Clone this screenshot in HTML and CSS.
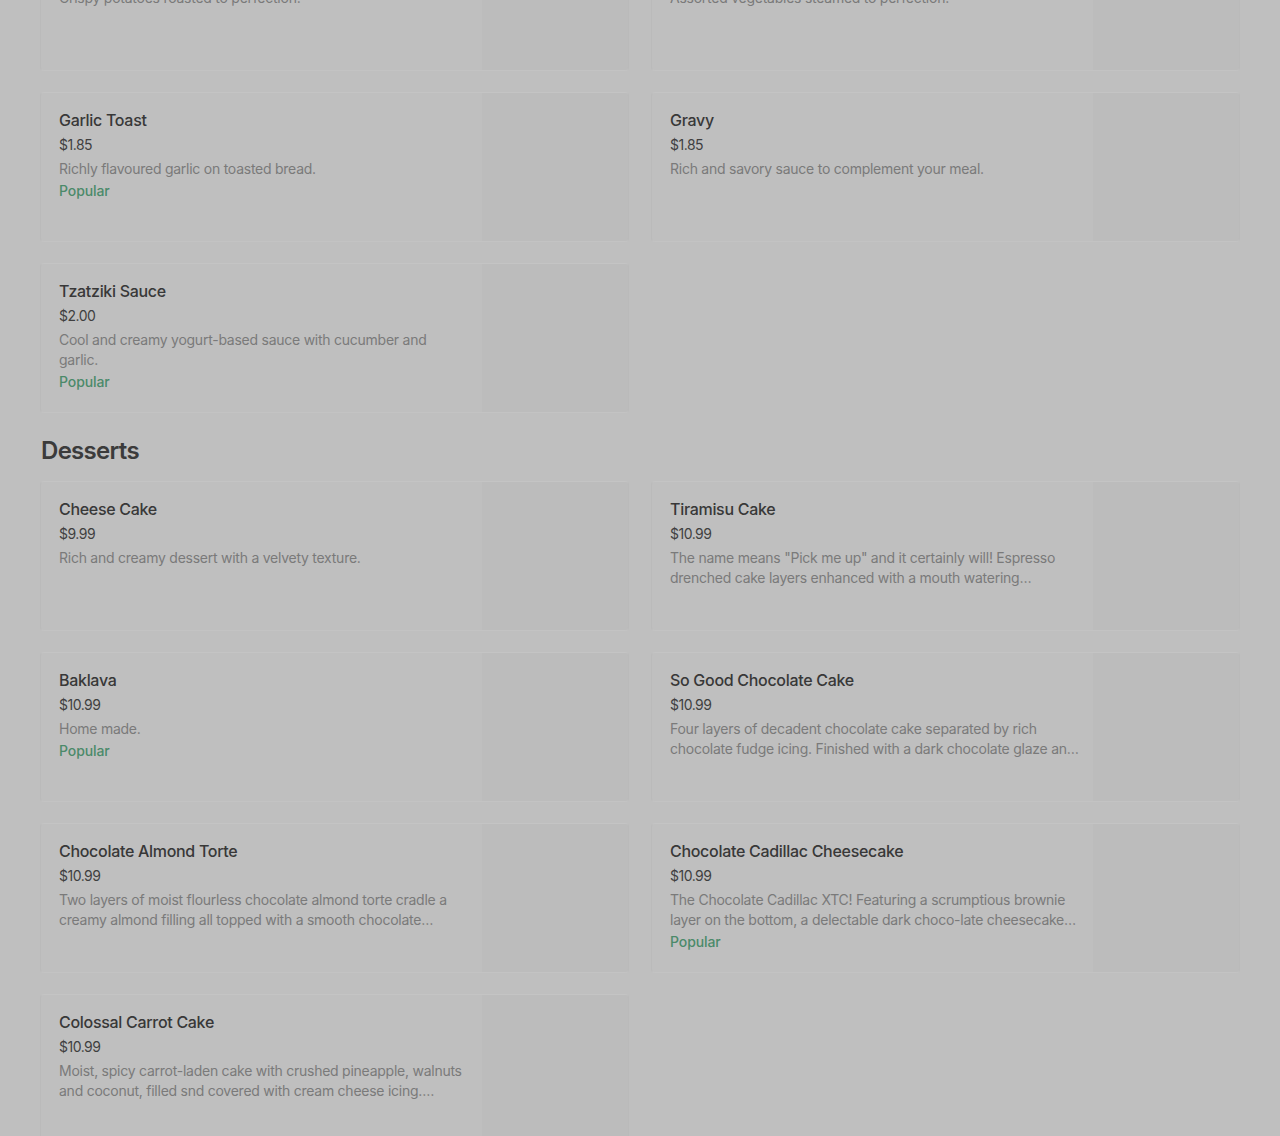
FILE: index.html
```html
<!DOCTYPE html>
<html lang="en">
<head>
<meta charset="utf-8">
<title>Menu</title>
<link rel="stylesheet" href="styles.css">
</head>
<body>
<main class="menu">
  <section class="section">
    <div class="grid">
      <article class="card">
        <div class="info">
          <h3 class="name">Roasted Potatoes</h3>
          <div class="price">$3.99</div>
          <p class="desc">Crispy potatoes roasted to perfection.</p>
        </div>
        <div class="thumb"></div>
      </article>
      <article class="card">
        <div class="info">
          <h3 class="name">Steamed Vegetables</h3>
          <div class="price">$3.99</div>
          <p class="desc">Assorted vegetables steamed to perfection.</p>
        </div>
        <div class="thumb"></div>
      </article>
      <article class="card">
        <div class="info">
          <h3 class="name">Garlic Toast</h3>
          <div class="price">$1.85</div>
          <p class="desc">Richly flavoured garlic on toasted bread.</p>
          <div class="tag">Popular</div>
        </div>
        <div class="thumb"></div>
      </article>
      <article class="card">
        <div class="info">
          <h3 class="name">Gravy</h3>
          <div class="price">$1.85</div>
          <p class="desc">Rich and savory sauce to complement your meal.</p>
        </div>
        <div class="thumb"></div>
      </article>
      <article class="card">
        <div class="info">
          <h3 class="name">Tzatziki Sauce</h3>
          <div class="price">$2.00</div>
          <p class="desc">Cool and creamy yogurt-based sauce with cucumber and garlic.</p>
          <div class="tag">Popular</div>
        </div>
        <div class="thumb"></div>
      </article>
    </div>
  </section>

  <section class="section">
    <h2 class="section-title">Desserts</h2>
    <div class="grid">
      <article class="card">
        <div class="info">
          <h3 class="name">Cheese Cake</h3>
          <div class="price">$9.99</div>
          <p class="desc">Rich and creamy dessert with a velvety texture.</p>
        </div>
        <div class="thumb"></div>
      </article>
      <article class="card">
        <div class="info">
          <h3 class="name">Tiramisu Cake</h3>
          <div class="price">$10.99</div>
          <p class="desc">The name means "Pick me up" and it certainly will! Espresso drenched cake layers enhanced with a mouth watering mascarpone cream.</p>
        </div>
        <div class="thumb"></div>
      </article>
      <article class="card">
        <div class="info">
          <h3 class="name">Baklava</h3>
          <div class="price">$10.99</div>
          <p class="desc">Home made.</p>
          <div class="tag">Popular</div>
        </div>
        <div class="thumb"></div>
      </article>
      <article class="card">
        <div class="info">
          <h3 class="name">So Good Chocolate Cake</h3>
          <div class="price">$10.99</div>
          <p class="desc">Four layers of decadent chocolate cake separated by rich chocolate fudge icing. Finished with a dark chocolate glaze and chocolate shavings.</p>
        </div>
        <div class="thumb"></div>
      </article>
      <article class="card">
        <div class="info">
          <h3 class="name">Chocolate Almond Torte</h3>
          <div class="price">$10.99</div>
          <p class="desc">Two layers of moist flourless chocolate almond torte cradle a creamy almond filling all topped with a smooth chocolate ganache.</p>
        </div>
        <div class="thumb"></div>
      </article>
      <article class="card">
        <div class="info">
          <h3 class="name">Chocolate Cadillac Cheesecake</h3>
          <div class="price">$10.99</div>
          <p class="desc">The Chocolate Cadillac XTC! Featuring a scrumptious brownie layer on the bottom, a delectable dark choco-late cheesecake, and a chocolate mousse.</p>
          <div class="tag">Popular</div>
        </div>
        <div class="thumb"></div>
      </article>
      <article class="card">
        <div class="info">
          <h3 class="name">Colossal Carrot Cake</h3>
          <div class="price">$10.99</div>
          <p class="desc">Moist, spicy carrot-laden cake with crushed pineapple, walnuts and coconut, filled snd covered with cream cheese icing. Topped with walnuts.</p>
        </div>
        <div class="thumb"></div>
      </article>
    </div>
  </section>
</main>
</body>
</html>
```

FILE: styles.css
```css
* {
  box-sizing: border-box;
}

html, body {
  margin: 0;
  padding: 0;
  background: #bfbfbf;
}

body {
  font-family: Inter, "Noto Sans", "Liberation Sans", sans-serif;
  color: #3d3d3d;
  overflow: hidden;
}

.menu {
  width: 1200px;
  margin: -79px auto 0;
}

.section-title {
  margin: 22px 0 14px 1px;
  font-size: 24px;
  line-height: 32px;
  font-weight: 600;
  color: #3b3b3b;
  letter-spacing: -0.7px;
}

.grid {
  display: grid;
  grid-template-columns: 1fr 1fr;
  column-gap: 22px;
  row-gap: 21px;
}

.card {
  display: flex;
  height: 150px;
  background: #bfbfbf;
  border: 1px solid #bababa;
  border-top-color: #c4c4c4;
  border-bottom-color: #c3c3c3;
  border-radius: 4px;
  overflow: hidden;
}

.info {
  flex: 1;
  min-width: 0;
  padding: 16px 14px 16px 18px;
}

.thumb {
  width: 146px;
  flex: none;
  background: #bcbcbc;
}

.name {
  margin: 0;
  font-size: 16px;
  line-height: 22px;
  font-weight: 500;
  color: #383838;
  letter-spacing: -0.3px;
}

.price {
  margin-top: 4px;
  font-size: 14px;
  line-height: 20px;
  color: #3f3f3f;
  letter-spacing: -0.5px;
}

.desc {
  margin: 4px 0 0;
  font-size: 14px;
  line-height: 20px;
  color: #7a7a7a;
  letter-spacing: -0.25px;
  display: -webkit-box;
  -webkit-line-clamp: 2;
  -webkit-box-orient: vertical;
  overflow: hidden;
}

.tag {
  margin-top: 2px;
  font-size: 14px;
  line-height: 20px;
  font-weight: 500;
  color: #4b8a6a;
  letter-spacing: -0.1px;
}
```
